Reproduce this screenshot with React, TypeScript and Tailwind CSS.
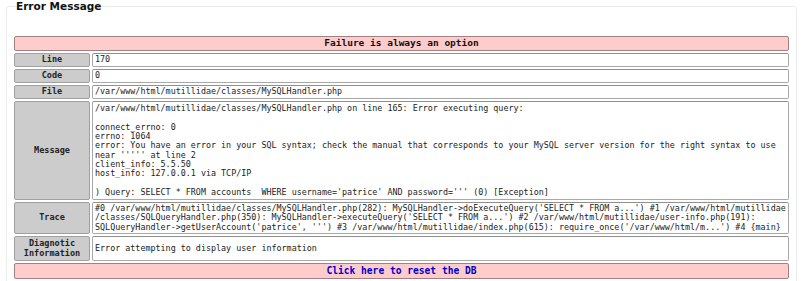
import React from 'react';

const mono = { fontFamily: '"DejaVu Sans Mono", "Liberation Mono", monospace' };

const messageLines = [
  '/var/www/html/mutillidae/classes/MySQLHandler.php on line 165: Error executing query:',
  '',
  'connect_errno: 0',
  'errno: 1064',
  'error: You have an error in your SQL syntax; check the manual that corresponds to your MySQL server version for the right syntax to use',
  "near ''''' at line 2",
  'client_info: 5.5.50',
  'host_info: 127.0.0.1 via TCP/IP',
  '',
  ") Query: SELECT * FROM accounts  WHERE username='patrice' AND password=''' (0) [Exception]",
];

const traceLines = [
  "#0 /var/www/html/mutillidae/classes/MySQLHandler.php(282): MySQLHandler->doExecuteQuery('SELECT * FROM a...') #1 /var/www/html/mutillidae",
  "/classes/SQLQueryHandler.php(350): MySQLHandler->executeQuery('SELECT * FROM a...') #2 /var/www/html/mutillidae/user-info.php(191):",
  "SQLQueryHandler->getUserAccount('patrice', ''') #3 /var/www/html/mutillidae/index.php(615): require_once('/var/www/html/m...') #4 {main}",
];

const Label: React.FC<{ children: React.ReactNode }> = ({ children }) => (
  <div className="w-[76px] shrink-0 flex items-center justify-center text-center bg-[#cccccc] border border-[#a0a0a0] rounded-[2px] font-bold text-[8.5px] leading-[9.5px] text-[#222]">
    {children}
  </div>
);

const Value: React.FC<{ children: React.ReactNode; className?: string }> = ({ children, className = '' }) => (
  <div className={`flex-1 bg-white border border-[#a8a8a8] border-t-[#8f8f8f] rounded-[2px] px-[2px] text-[8.4px] leading-[9.35px] text-[#222] whitespace-pre ${className}`}>
    {children}
  </div>
);

const Row: React.FC<{ label: React.ReactNode; h: string; children: React.ReactNode; valueClass?: string }> = ({ label, h, children, valueClass }) => (
  <div className={`flex gap-[2px] ${h}`}>
    <Label>{label}</Label>
    <Value className={valueClass}>{children}</Value>
  </div>
);

export default function App() {
  return (
    <div className="w-[803px] h-[281px] bg-white overflow-hidden" style={mono}>
      <fieldset className="mx-[6px] border border-[#ececec] rounded-[3px] px-[7px] pb-[4px]">
        <legend
          className="ml-[2px] text-[10.5px] font-bold text-[#111] leading-[13px]"
          style={{ fontFamily: '"DejaVu Sans", Verdana, sans-serif' }}
        >
          Error Message
        </legend>
        <div className="mt-[23px] flex flex-col gap-[2px]">
          <div className="h-[15px] flex items-center justify-center bg-[#ffcccc] border border-[#a08080] rounded-[2px] font-bold text-[9.5px] text-[#111]">
            Failure is always an option
          </div>
          <Row label="Line" h="h-[14px]" valueClass="flex items-center">170</Row>
          <Row label="Code" h="h-[14px]" valueClass="flex items-center">0</Row>
          <Row label="File" h="h-[14px]" valueClass="flex items-center">/var/www/html/mutillidae/classes/MySQLHandler.php</Row>
          <Row label="Message" h="h-[99px]" valueClass="pt-[2px]">
            {messageLines.map((l, i) => (
              <div key={i} className="h-[9.35px]">{l}</div>
            ))}
          </Row>
          <Row label="Trace" h="h-[32px]" valueClass="pt-[1px]">
            {traceLines.map((l, i) => (
              <div key={i} className="h-[9.35px]">{l}</div>
            ))}
          </Row>
          <Row label={<span>Diagnotic<br />Information</span>} h="h-[25px]" valueClass="flex items-center">
            Error attempting to display user information
          </Row>
          <div className="h-[16px] flex items-center justify-center bg-[#ffcccc] border border-[#a08080] rounded-[2px]">
            <a className="font-bold text-[9.6px] text-[#0000cc] cursor-pointer">Click here to reset the DB</a>
          </div>
        </div>
      </fieldset>
    </div>
  );
}
